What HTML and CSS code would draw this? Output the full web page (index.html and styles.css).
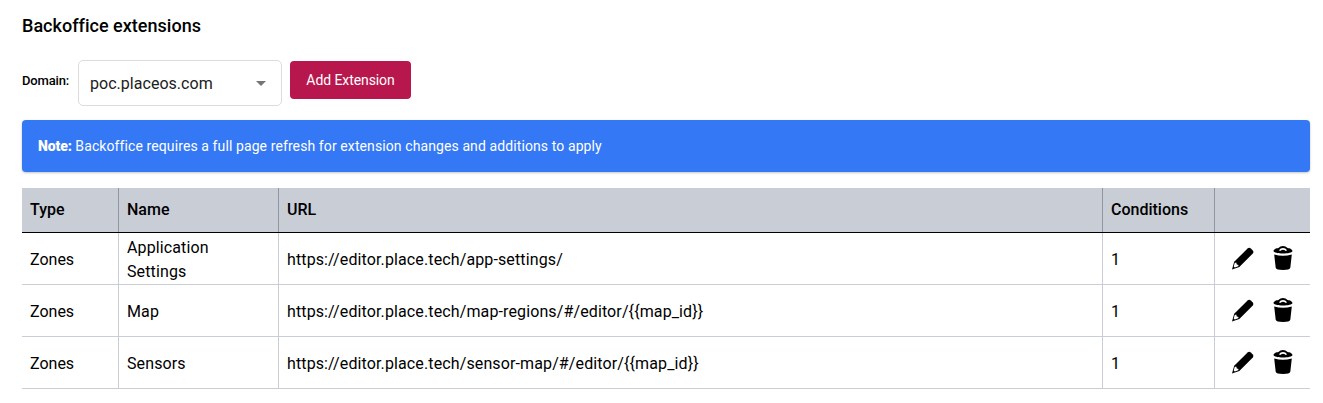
FILE: index.html
```html
<!DOCTYPE html>
<html lang="en">
<head>
<meta charset="utf-8">
<title>Backoffice extensions</title>
<link rel="stylesheet" href="styles.css">
</head>
<body>
<svg class="symbols" aria-hidden="true">
  <symbol id="pencil" viewBox="0 0 24 24">
    <path d="M16.6 1.5Q18.2 .1 19.8 1.5L21.8 3.5Q23.1 5 21.8 6.5L8.3 19.9 1 22.4 3.2 14.8Z"/>
    <path class="cut" d="M3.7 15.9L5.2 15.6 5.8 17.4 7.6 18.1 7.2 19.3 3.8 20.5 2.7 19.4Z"/>
  </symbol>
  <symbol id="trash" viewBox="0 0 24 26">
    <path d="M3.2 9.4Q12 12 20.8 9.4L19.3 22.8Q18.7 25 12 25T4.7 22.8Z"/>
    <path d="M2.5 6.1C2.5 4.1 5.2 3.2 7.4 2.9Q9.3 1 12 1T16.6 2.9C18.8 3.2 21.5 4.1 21.5 6.1C21.5 9.4 2.5 9.4 2.5 6.1Z"/>
    <path class="cut" d="M8 5.2Q9.4 2.9 12 2.9T16 5.2L14.9 6.1 13.7 5.2Q12 4.3 10.3 5.2L9.1 6.1Z"/>
  </symbol>
</svg>
<main class="page">
  <h1 class="title">Backoffice extensions</h1>
  <div class="toolbar">
    <span class="label">Domain:</span>
    <div class="select"><span>poc.placeos.com</span><i class="arrow"></i></div>
    <button class="add">Add Extension</button>
  </div>
  <div class="note"><p><b>Note:</b> <span class="message">Backoffice requires a full page refresh for extension changes and additions to apply</span></p></div>
  <div class="table">
    <div class="row head"><div>Type</div><div>Name</div><div>URL</div><div>Conditions</div><div></div></div>
    <div class="row"><div>Zones</div><div>Application Settings</div><div>https://editor.place.tech/app-settings/</div><div>1</div><div class="actions"><svg class="pencil"><use href="#pencil"/></svg><svg class="trash"><use href="#trash"/></svg></div></div>
    <div class="row"><div>Zones</div><div>Map</div><div>https://editor.place.tech/map-regions/#/editor/{{map_id}}</div><div>1</div><div class="actions"><svg class="pencil"><use href="#pencil"/></svg><svg class="trash"><use href="#trash"/></svg></div></div>
    <div class="row"><div>Zones</div><div>Sensors</div><div>https://editor.place.tech/sensor-map/#/editor/{{map_id}}</div><div>1</div><div class="actions"><svg class="pencil"><use href="#pencil"/></svg><svg class="trash"><use href="#trash"/></svg></div></div>
  </div>
</main>
</body>
</html>
```
FILE: styles.css
```css
* { box-sizing: border-box; }
body { margin: 0; background: #fff; color: #000; font: 400 16px/24px Roboto, sans-serif; overflow: hidden; }
.symbols { display: none; }
.cut { fill: #fff; }
.page { padding: 12px 13px 0 22px; }
.title { margin: 0; font-size: 18px; line-height: 28px; font-weight: 500; letter-spacing: .02px; }
.toolbar { display: flex; align-items: center; height: 46px; margin-top: 20px; }
.label { width: 56px; font-size: 13px; font-weight: 500; line-height: 20px; padding-bottom: 5px; letter-spacing: -.15px; }
.select { display: flex; justify-content: space-between; align-items: center; width: 204px; height: 46px; padding: 0 15px 0 11px; border: 1px solid #dcdcdc; border-radius: 5px; color: #202020; letter-spacing: .03px; }
.select span { padding-top: 2px; }
.arrow { border: 5px solid transparent; border-top-color: #757575; border-bottom: 0; }
.add { align-self: flex-start; width: 121px; height: 38px; margin: 1px 0 0 8px; padding: 0; border: 0; border-radius: 4px; background: #b8174e; color: #fff; font: 400 14px/38px Roboto, sans-serif; letter-spacing: -.08px; }
.note { display: flex; align-items: center; height: 52px; margin-top: 14px; padding: 0 16px; border-radius: 4px; background: #3478f6; color: #fff; font-size: 14px; line-height: 20px; box-shadow: 0 1px 3px rgba(0,0,0,.12), 0 1px 2px rgba(0,0,0,.12); }
.note p { margin: 0; }
.note b { font-weight: 900; letter-spacing: -.1px; }
.message { letter-spacing: .1px; }
.table { margin-top: 16px; }
.row { display: grid; grid-template-columns: 96px 160px 1fr 112px 96px; height: 52px; border-bottom: 1px solid #c9cdd5; }
.row > div { display: flex; align-items: center; padding: 2px 8px 0; border-left: 1px solid #c9cdd5; letter-spacing: .12px; }
.row > div:first-child { border-left: 0; letter-spacing: 0; }
.row.head { height: 45px; background: #c9cdd5; border-bottom-color: #000; font-weight: 500; }
.row.head > div { padding-top: 0; border-left-color: #9196a3; letter-spacing: 0; }
.row > .actions { gap: 16px; padding: 0 0 0 16px; }
.pencil { width: 24px; height: 24px; }
.trash { width: 24px; height: 26px; margin: -1px 0 0 -.5px; }
```
